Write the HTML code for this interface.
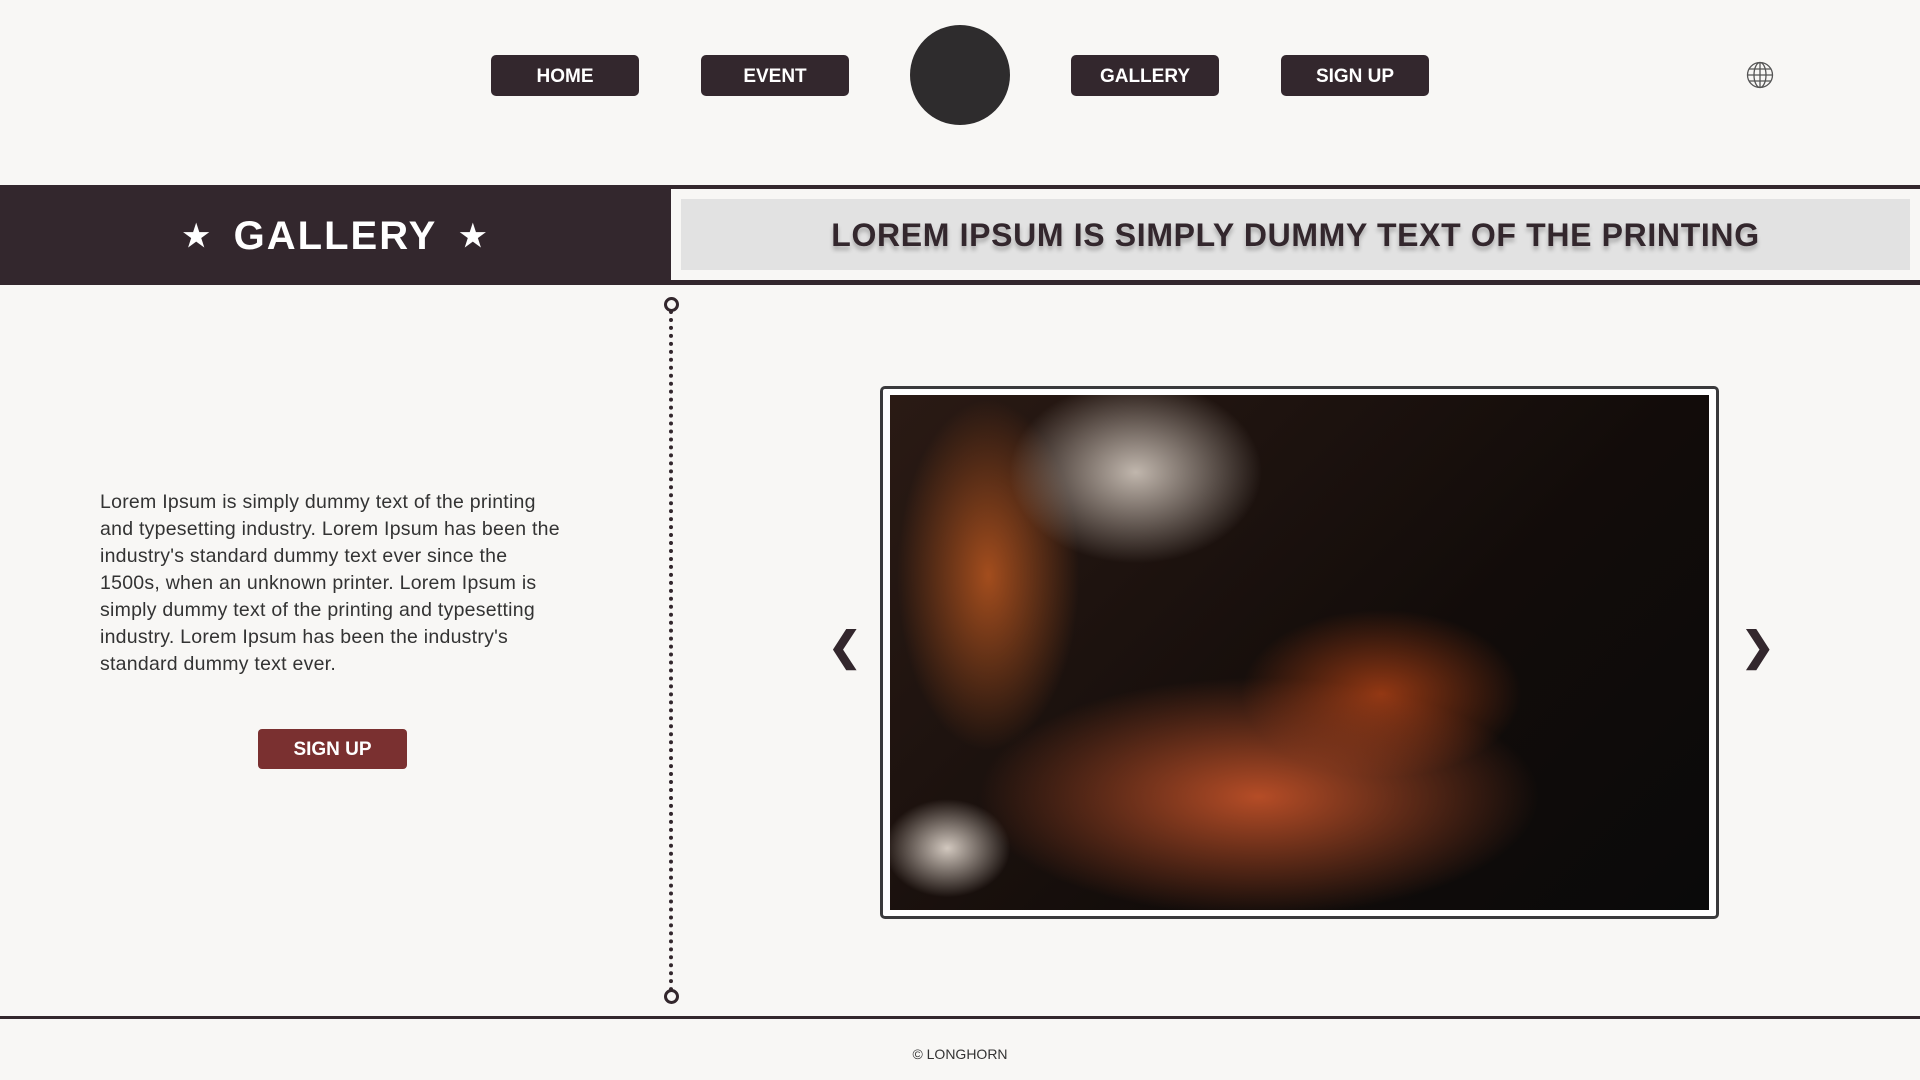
<!DOCTYPE html>
<html><head><meta charset="utf-8"><style>
*{margin:0;padding:0;box-sizing:border-box}
body{width:1920px;height:1080px;background:#f8f7f5;font-family:"Liberation Sans",sans-serif;position:relative;overflow:hidden;color:#2f2a2c}
.btn{position:absolute;top:55px;width:148px;height:41px;background:#33272d;border-radius:5px;color:#fff;font-weight:bold;font-size:19px;text-align:center;line-height:43px}
.circle{position:absolute;left:910px;top:25px;width:100px;height:100px;border-radius:50%;background:#2e2c2d}
.band{position:absolute;left:0;top:185px;width:1920px;height:100px;background:#33272d}
.inner{position:absolute;left:671px;top:4px;right:0;height:91px;background:#f8f7f5}
.grey{position:absolute;left:681px;top:199px;width:1229px;height:71px;background:#e2e2e2;text-align:center;line-height:73px;font-weight:bold;font-size:32px;letter-spacing:0.65px;color:#33272d;text-shadow:0 4px 4px rgba(0,0,0,.25)}
.gal{position:absolute;left:0;top:185px;width:671px;height:100px;text-align:center;line-height:102px;color:#fff;font-weight:bold;font-size:40px;letter-spacing:2px}
.gal span{font-size:30px;vertical-align:3px;margin:0 22px}
.dots{position:absolute;left:669px;top:310px;width:0;height:682px;border-left:4px dotted #33272d}
.ring{position:absolute;left:664px;width:15px;height:15px;border:3px solid #33272d;border-radius:50%;background:#f8f7f5}
p{position:absolute;left:100px;top:489px;font-size:19.5px;letter-spacing:0.25px;line-height:27px;color:#333;white-space:nowrap}
.sign{position:absolute;left:258px;top:729px;width:149px;height:40px;background:#7a3030;border-radius:4px;color:#fff;font-weight:bold;font-size:19px;text-align:center;line-height:42px}
.frame{position:absolute;left:880px;top:386px;width:839px;height:533px;border:3px solid #3a3a3c;border-radius:5px;background:#fff}
.img{position:absolute;left:7px;top:6px;width:819px;height:515px;background:
radial-gradient(ellipse 180px 130px at 30% 15%,rgba(210,200,190,.9),transparent 70%),
radial-gradient(ellipse 130px 250px at 12% 35%,rgba(170,80,30,.95),transparent 70%),
radial-gradient(ellipse 400px 170px at 45% 78%,rgba(190,80,40,.95),transparent 70%),
radial-gradient(ellipse 200px 120px at 60% 58%,rgba(160,60,20,.9),transparent 70%),
radial-gradient(ellipse 90px 70px at 7% 88%,rgba(230,220,210,.9),transparent 70%),
linear-gradient(135deg,#2a1a14,#120c0a 60%,#0a0a0a)}
.arr{position:absolute;top:624px;font-size:40px;font-weight:bold;color:#33272d}
.foot{position:absolute;top:1016px;left:0;width:1920px;height:3px;background:#33272d}
.ft{position:absolute;top:1046px;width:1920px;text-align:center;font-size:14px;color:#333}
</style></head><body>
<div class="btn" style="left:491px">HOME</div>
<div class="btn" style="left:701px">EVENT</div>
<div class="circle"></div>
<div class="btn" style="left:1071px">GALLERY</div>
<div class="btn" style="left:1281px">SIGN UP</div>
<svg style="position:absolute;left:1746px;top:61px" width="28" height="28" viewBox="0 0 28 28" fill="none" stroke="#555" stroke-width="1.3"><circle cx="14" cy="14" r="12.5"/><ellipse cx="14" cy="14" rx="6" ry="12.5"/><line x1="14" y1="1.5" x2="14" y2="26.5"/><line x1="1.5" y1="14" x2="26.5" y2="14"/><line x1="3.5" y1="8" x2="24.5" y2="8"/><line x1="3.5" y1="20" x2="24.5" y2="20"/></svg>
<div class="band"><div class="inner"></div></div>
<div class="gal"><span>★</span>GALLERY<span>★</span></div>
<div class="grey">LOREM IPSUM IS SIMPLY DUMMY TEXT OF THE PRINTING</div>
<div class="dots"></div>
<div class="ring" style="top:297px"></div>
<div class="ring" style="top:989px"></div>
<p>Lorem Ipsum is simply dummy text of the printing<br>and typesetting industry. Lorem Ipsum has been the<br>industry's standard dummy text ever since the<br>1500s, when an unknown printer. Lorem Ipsum is<br>simply dummy text of the printing and typesetting<br>industry. Lorem Ipsum has been the industry's<br>standard dummy text ever.</p>
<div class="sign">SIGN UP</div>
<div class="arr" style="left:828px">❮</div>
<div class="arr" style="left:1741px">❯</div>
<div class="frame"><div class="img"></div></div>
<div class="foot"></div>
<div class="ft">© LONGHORN</div>
</body></html>
